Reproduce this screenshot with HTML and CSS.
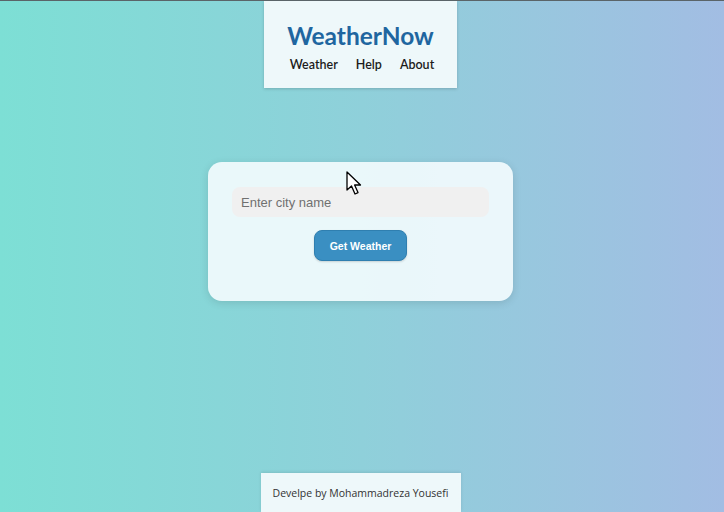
FILE: index.html
```html
<!DOCTYPE html>
<html lang="en">
<head>
<meta charset="utf-8">
<title>WeatherNow</title>
<link rel="stylesheet" href="styles.css">
</head>
<body>
<div class="page">
  <header class="header">
    <h1 class="logo">WeatherNow</h1>
    <nav class="nav">
      <a href="#">Weather</a>
      <a href="#">Help</a>
      <a href="#">About</a>
    </nav>
  </header>
  <main class="card">
    <input class="city" type="text" placeholder="Enter city name">
    <button class="btn">Get Weather</button>
  </main>
  <footer class="footer">Develpe by Mohammadreza Yousefi</footer>
  <svg class="cursor" width="18" height="26" viewBox="0 0 18 26"><path d="M1 1 L1 19 L5.5 15 L9 23 L12 21.6 L8.6 14 L14.5 14 Z" fill="#fff" stroke="#000" stroke-width="1.3" stroke-linejoin="round"/></svg>
</div>
</body>
</html>
```
FILE: styles.css
```css
* { box-sizing: border-box; }
html, body { margin: 0; padding: 0; }
body {
  height: 512px;
  overflow: hidden;
  background: linear-gradient(90deg, #7ddfd5 0%, #8fd0da 50%, #a2bde3 100%);
  border-top: 1px solid #5a6468;
  font-family: "Open Sans", "Liberation Sans", sans-serif;
}
.page {
  position: relative;
  height: 511px;
  display: flex;
  flex-direction: column;
  align-items: center;
  padding-right: 3px;
}
.header {
  width: 193px;
  height: 87px;
  background: rgba(245, 251, 252, 0.93);
  box-shadow: 0 1px 3px rgba(0,0,0,0.18);
  display: flex;
  flex-direction: column;
  align-items: center;
  padding-top: 20px;
}
.logo {
  margin: 0;
  font-family: Lato, "Open Sans", sans-serif;
  font-weight: 700;
  font-size: 24.5px;
  line-height: 30px;
  color: #1f66a0;
}
.nav {
  display: flex;
  gap: 18px;
  margin-top: 6px;
  margin-left: 3px;
}
.nav a {
  font-family: Lato, "Open Sans", sans-serif;
  font-size: 12.5px;
  font-weight: 600;
  color: #1c1c1c;
  text-decoration: none;
  line-height: 16px;
}
.card {
  margin-top: 74px;
  width: 305px;
  height: 139px;
  background: rgba(242, 251, 253, 0.92);
  border-radius: 14px;
  box-shadow: 0 2px 8px rgba(0,0,0,0.12);
  display: flex;
  flex-direction: column;
  align-items: center;
  padding-top: 25px;
}
.city {
  width: 257px;
  height: 30px;
  border: none;
  border-radius: 8px;
  background: #f0f0f0;
  padding: 0 9px;
  font-family: "Liberation Sans", Arial, sans-serif;
  font-size: 13px;
  color: #333;
  outline: none;
}
.city::placeholder { color: #707070; }
.btn {
  margin-top: 13px;
  width: 93px;
  height: 31px;
  border: 1px solid #2f7fb0;
  border-radius: 8px;
  background: #3a8fc2;
  color: #fff;
  font-family: "Liberation Sans", Arial, sans-serif;
  font-weight: 700;
  font-size: 10.5px;
  box-shadow: 0 1px 2px rgba(0,0,0,0.15);
}
.footer {
  margin-top: auto;
  width: 200px;
  height: 39px;
  background: rgba(245, 251, 252, 0.93);
  display: flex;
  align-items: center;
  justify-content: center;
  font-size: 10.5px;
  color: #333;
  box-shadow: 0 -1px 3px rgba(0,0,0,0.1);
}
.cursor {
  position: absolute;
  left: 346px;
  top: 170px;
}
```
